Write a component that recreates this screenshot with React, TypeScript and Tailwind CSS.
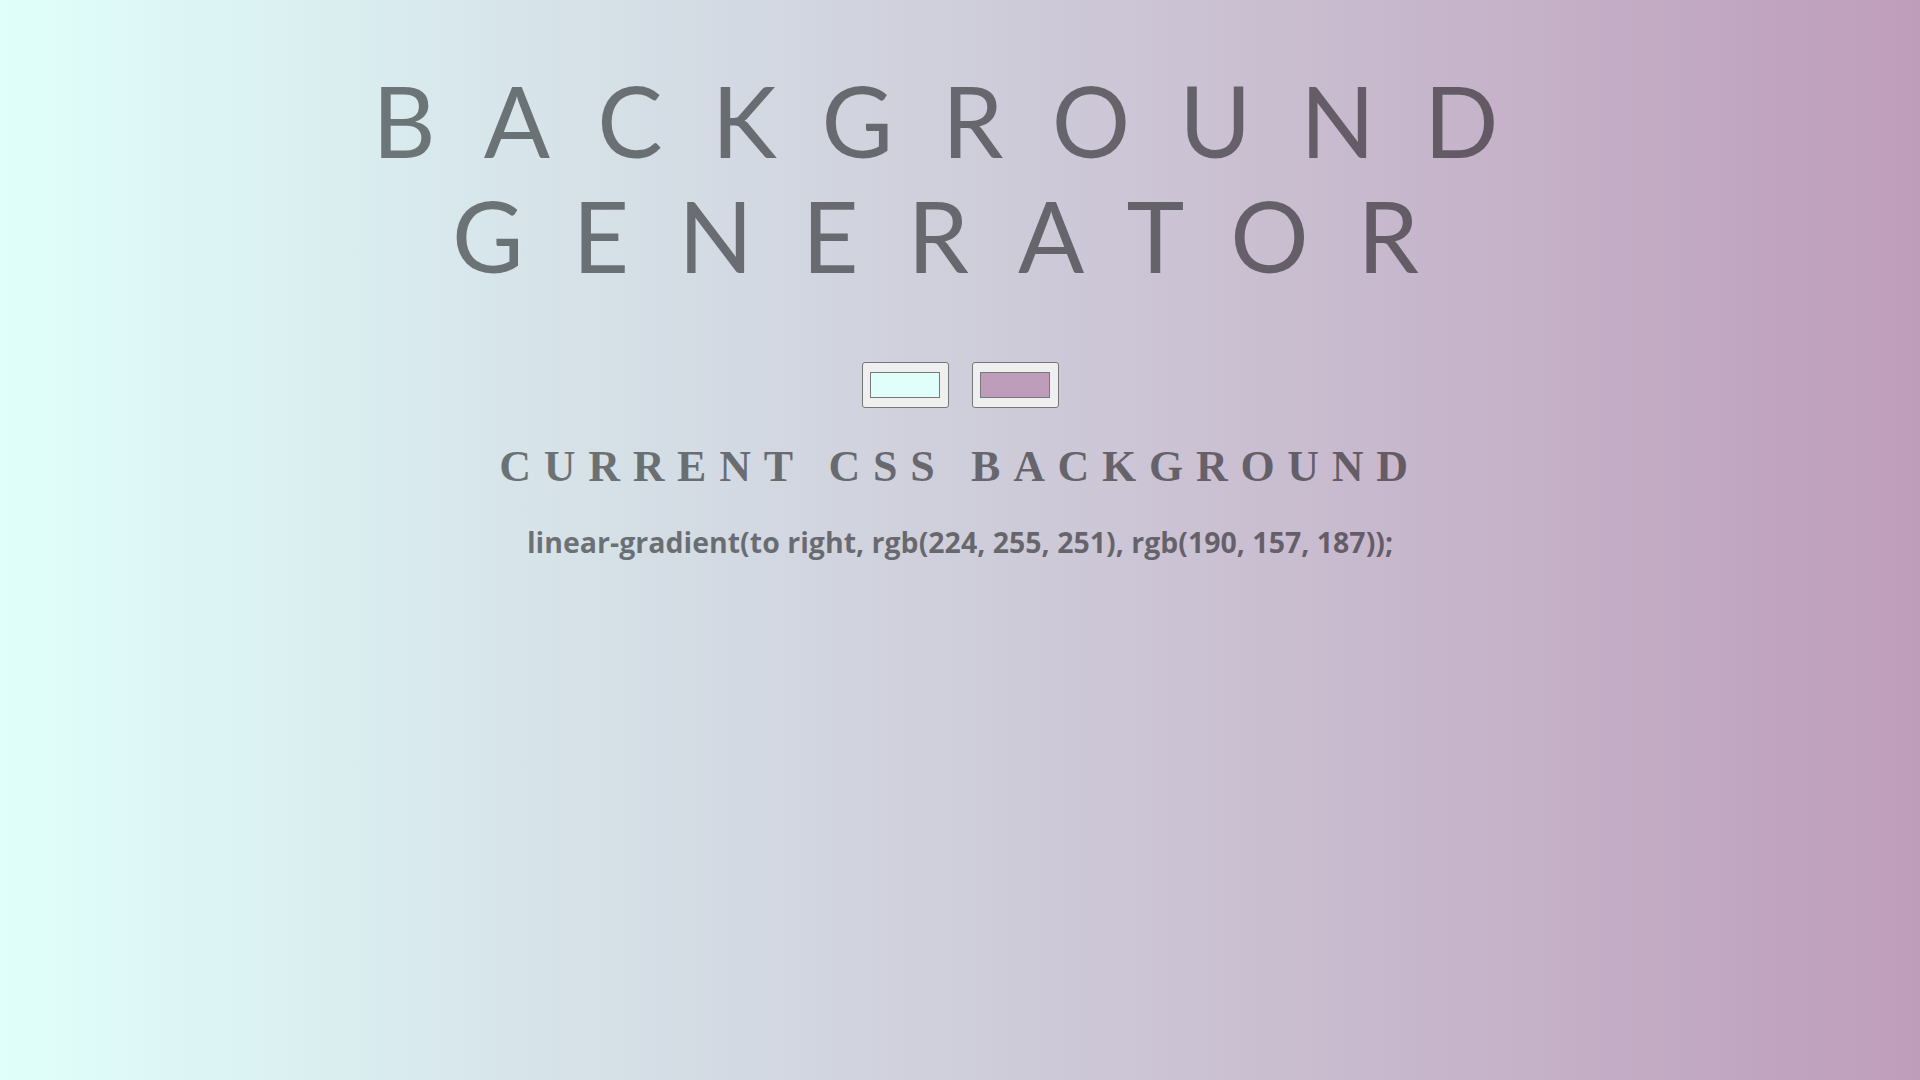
import React from "react";

function Swatch({ color }: { color: string }) {
  return (
    <div className="w-[87px] h-[46px] rounded-[3px] border border-[#767676] bg-[#efefef] flex items-center justify-center">
      <div className="w-[70px] h-[26px] border border-[#777777]" style={{ backgroundColor: color }} />
    </div>
  );
}

export default function App() {
  return (
    <div className="min-h-screen w-full bg-[linear-gradient(to_right,rgb(224,255,251),rgb(190,157,187))] flex flex-col items-center text-black/50">
      <h1 className="mt-[63px] text-center font-['Lato','Liberation_Sans',sans-serif] text-[98px] leading-[115px] font-normal tracking-[0.5em]">
        BACKGROUND
        <br />
        GENERATOR
      </h1>
      <div className="mt-[69px] flex gap-[23px]">
        <Swatch color="#e0fffb" />
        <Swatch color="#be9dbb" />
      </div>
      <h3 className="mt-[37px] text-center font-['Liberation_Serif',serif] font-bold text-[44px] leading-[44px] tracking-[12.7px]">
        CURRENT CSS BACKGROUND
      </h3>
      <p className="mt-[36px] text-center font-['Open_Sans','Liberation_Sans',sans-serif] font-bold text-[28.5px] leading-[34px]">
        linear-gradient(to right, rgb(224, 255, 251), rgb(190, 157, 187));
      </p>
    </div>
  );
}
